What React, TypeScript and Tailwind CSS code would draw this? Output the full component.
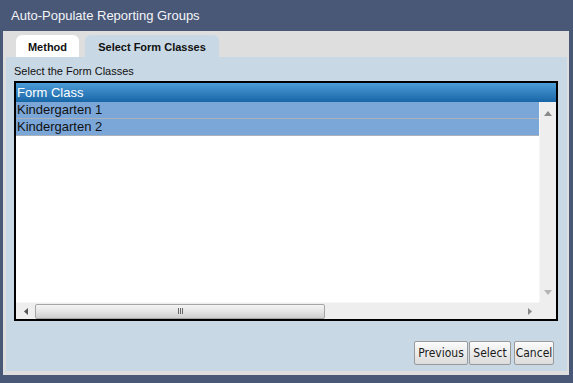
import React from "react";

const font = { fontFamily: '"Liberation Sans", Arial, sans-serif' };

function Btn({ label, w }: { label: string; w: string }) {
  return (
    <button
      className={`h-[24px] ${w} px-0 border border-[#9a9a9a] rounded-[2px] bg-gradient-to-b from-[#fbfbfb] to-[#dcdcdc] text-[12px] text-[#1a1a1a] leading-none`}
      style={{ fontFamily: '"DejaVu Sans Condensed", "Liberation Sans", sans-serif' }}
    >
      {label}
    </button>
  );
}

export default function App() {
  return (
    <div className="w-[573px] h-[383px] bg-[#4a5877] flex flex-col overflow-hidden" style={font}>
      <div className="h-[31px] shrink-0 flex items-center pl-[11px] pt-[1px] text-[13px] text-[#f2f4f8]">
        Auto-Populate Reporting Groups
      </div>
      <div className="ml-[3px] w-[566px] h-[344px] bg-[#dedede] flex flex-col pt-[4px] pl-[3px] pr-[2px] pb-[4px]">
        <div className="flex h-[22px] shrink-0 pl-[10px] gap-[6px]">
          <div className="w-[63px] bg-white rounded-t-[6px] flex items-center justify-center text-[11px] font-bold text-[#111] pt-[3px]">
            Method
          </div>
          <div className="w-[134px] bg-[#c8d8e4] rounded-t-[6px] flex items-center justify-center text-[11px] font-bold text-[#111] pt-[3px]">
            Select Form Classes
          </div>
        </div>
        <div className="flex-1 bg-[#c8d8e4] flex flex-col pl-[8px] pr-[9px] pb-[6px]">
          <div className="h-[24px] shrink-0 flex items-end pb-[2px] text-[11px] text-[#111]">
            Select the Form Classes
          </div>
          <div className="w-[544px] h-[240px] border-2 border-black bg-white flex flex-col shrink-0">
            <div className="h-[19px] shrink-0 bg-gradient-to-b from-[#4c9dd8] to-[#1766a6] text-white text-[13px] flex items-center pl-[1px]">
              Form Class
            </div>
            <div className="flex flex-1 min-h-0">
              <div className="w-[523px] flex flex-col">
                <div className="h-[17px] bg-[#7ba6d8] border-b border-[#a9b2bb] text-[13px] text-[#111] flex items-center pl-[1px]">
                  Kindergarten 1
                </div>
                <div className="h-[17px] bg-[#7ba6d8] border-b border-[#a9b2bb] text-[13px] text-[#111] flex items-center pl-[1px]">
                  Kindergarten 2
                </div>
              </div>
              <div className="w-[17px] bg-[#eeeeee] border-l border-[#f7f7f7] flex flex-col items-center justify-between pt-[9px] pb-[7px]">
                <svg width="8" height="5" viewBox="0 0 8 5">
                  <path d="M4 0 L8 5 L0 5 Z" fill="#8a8a8a" />
                </svg>
                <svg width="8" height="5" viewBox="0 0 8 5">
                  <path d="M0 0 L8 0 L4 5 Z" fill="#b5b5b5" />
                </svg>
              </div>
            </div>
            <div className="h-[17px] shrink-0 flex">
              <div className="w-[523px] bg-[#eeeeee] flex items-center border-t border-[#f7f7f7]">
                <div className="w-[19px] flex justify-center">
                  <svg width="4" height="7" viewBox="0 0 4 7">
                    <path d="M4 0 L4 7 L0 3.5 Z" fill="#555" />
                  </svg>
                </div>
                <div className="w-[290px] h-[15px] rounded-[2px] border border-[#a5a5a5] bg-gradient-to-b from-[#f4f4f4] via-[#e4e4e4] to-[#cfcfcf] flex items-center justify-center gap-[1px]">
                  <div className="w-[1px] h-[6px] bg-[#666]" />
                  <div className="w-[1px] h-[6px] bg-[#666]" />
                  <div className="w-[1px] h-[6px] bg-[#666]" />
                </div>
                <div className="flex-1" />
                <div className="w-[19px] flex justify-center">
                  <svg width="4" height="7" viewBox="0 0 4 7">
                    <path d="M0 0 L4 3.5 L0 7 Z" fill="#888" />
                  </svg>
                </div>
              </div>
              <div className="w-[17px] bg-[#eeeeee]" />
            </div>
          </div>
          <div className="flex-1" />
          <div className="flex justify-end gap-[1px] pr-[4px]">
            <Btn label="Previous" w="w-[54px]" />
            <Btn label="Select" w="w-[42px]" />
            <div className="w-[1px]" />
            <Btn label="Cancel" w="w-[40px]" />
          </div>
        </div>
      </div>
    </div>
  );
}
